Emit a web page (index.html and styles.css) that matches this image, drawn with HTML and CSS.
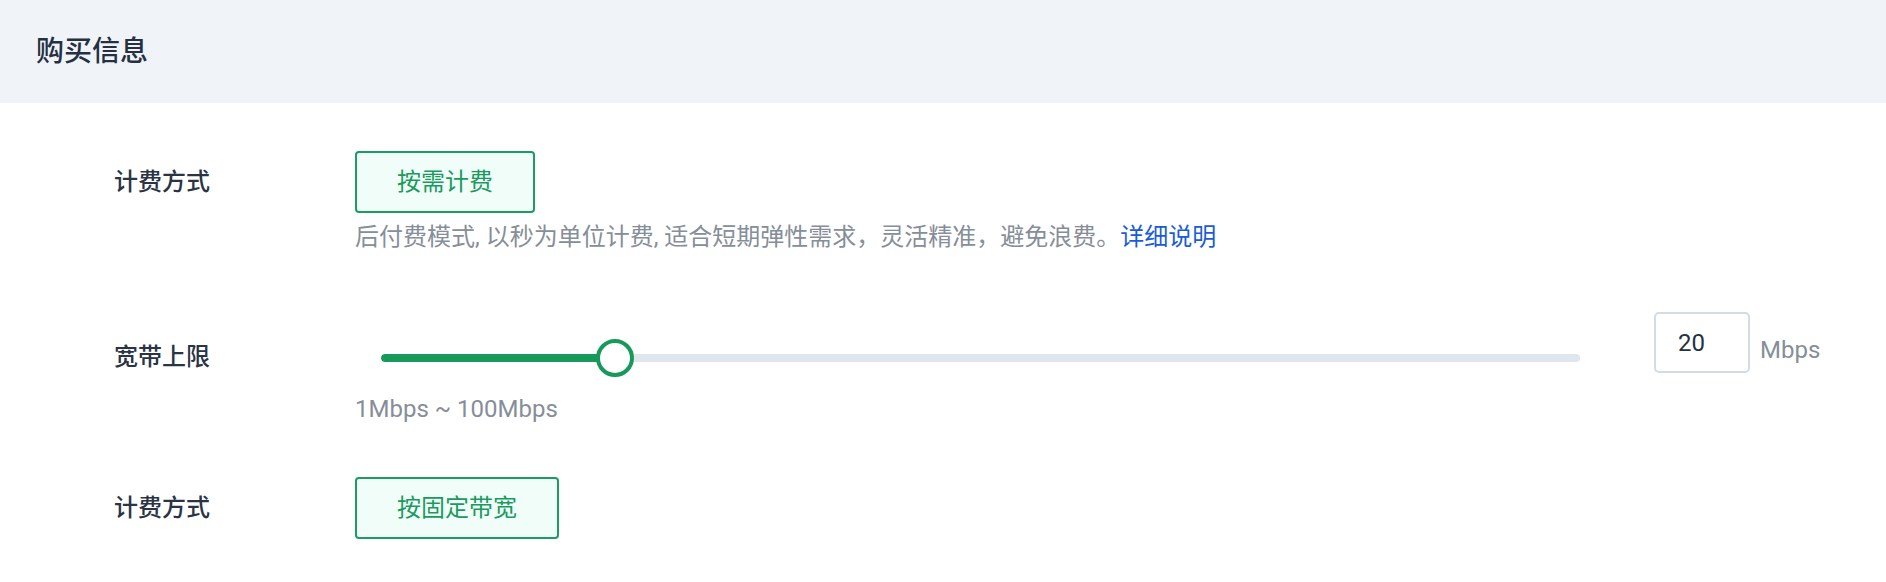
FILE: index.html
```html
<!DOCTYPE html>
<html lang="zh-CN">
<head>
<meta charset="utf-8">
<title>购买信息</title>
<link rel="stylesheet" href="styles.css">
</head>
<body>
<div class="panel">
  <div class="panel-header">购买信息</div>
  <div class="form">
    <div class="row row-billing">
      <div class="label label-btn">计费方式</div>
      <div class="content">
        <button class="choice">按需计费</button>
        <div class="desc">后付费模式, 以秒为单位计费, 适合短期弹性需求，灵活精准，避免浪费。<a class="link" href="#">详细说明</a></div>
      </div>
    </div>
    <div class="row row-bandwidth">
      <div class="label label-slider">宽带上限</div>
      <div class="content">
        <div class="slider-line">
          <div class="slider">
            <div class="track"><div class="fill" style="width: 19.5%"></div></div>
            <div class="thumb" style="left: 19.5%"></div>
          </div>
          <div class="num-input">20</div>
          <div class="unit">Mbps</div>
        </div>
        <div class="range">1Mbps ~ 100Mbps</div>
      </div>
    </div>
    <div class="row row-mode">
      <div class="label label-btn">计费方式</div>
      <div class="content">
        <button class="choice">按固定带宽</button>
      </div>
    </div>
  </div>
</div>
</body>
</html>
```

FILE: styles.css
```css
* { box-sizing: border-box; }
html, body {
  margin: 0;
  background: #ffffff;
  font-family: Roboto, "Noto Sans CJK SC", sans-serif;
  color: #2a3445;
}
.panel-header {
  height: 103px;
  background: #f0f4f9;
  display: flex;
  align-items: center;
  padding: 0 0 6px 36px;
  font-size: 28px;
  font-weight: 500;
  color: #253142;
}
.form {
  padding: 48px 0 0 114px;
}
.row {
  display: grid;
  grid-template-columns: 241px 1fr;
}
.row-bandwidth { margin-top: 57px; }
.row-mode { margin-top: 50px; }
.label {
  font-size: 24px;
  font-weight: 500;
  color: #2a3445;
  line-height: 36px;
}
.label-btn {
  height: 62px;
  display: flex;
  align-items: center;
}
.label-slider { margin-top: 27px; }
.content {
  display: flex;
  flex-direction: column;
  align-items: flex-start;
}
.choice {
  height: 62px;
  padding: 0 40px;
  border: 2px solid #1b9c60;
  border-radius: 4px;
  background: #f0fdf9;
  color: #1a9a5d;
  font-family: Roboto, "Noto Sans CJK SC", sans-serif;
  font-size: 24px;
  line-height: 1;
  cursor: pointer;
}
.desc {
  margin-top: 6px;
  font-size: 24px;
  line-height: 36px;
  color: #868e99;
  white-space: nowrap;
}
.link {
  color: #1a5cd6;
  text-decoration: none;
}
.slider-line {
  display: flex;
  align-items: flex-start;
}
.slider {
  position: relative;
  width: 1199px;
  height: 38px;
  margin: 27px 0 0 26px;
}
.track {
  margin-top: 15px;
  height: 8px;
  border-radius: 4px;
  background: #dfe6ee;
  overflow: hidden;
}
.fill {
  height: 100%;
  background: #18995c;
  border-radius: 4px;
}
.thumb {
  position: absolute;
  top: 0;
  width: 38px;
  height: 38px;
  margin-left: -19px;
  border-radius: 50%;
  border: 4px solid #18995c;
  background: #ffffff;
}
.num-input {
  margin-left: 74px;
  width: 96px;
  height: 61px;
  border: 2px solid #d3dbe5;
  border-radius: 5px;
  padding-left: 22px;
  display: flex;
  align-items: center;
  font-size: 24px;
  color: #253142;
}
.unit {
  margin: 20px 0 0 10px;
  font-size: 24px;
  line-height: 36px;
  color: #868e99;
}
.range {
  margin-top: 14px;
  font-size: 24px;
  line-height: 36px;
  color: #868e99;
}
```
